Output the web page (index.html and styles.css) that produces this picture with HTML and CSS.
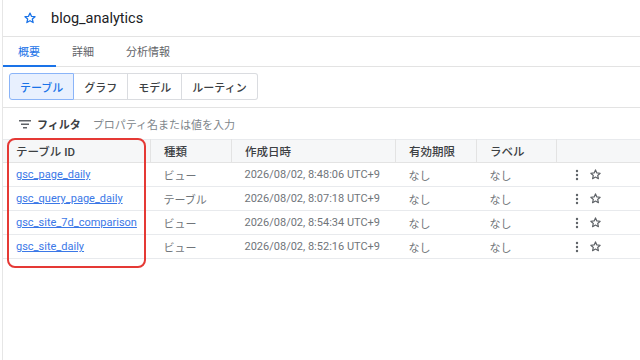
FILE: index.html
```html
<!DOCTYPE html>
<html lang="ja">
<head>
    <meta charset="UTF-8">
    <meta name="viewport" content="width=device-width, initial-scale=1.0">
    <title>blog_analytics</title>
    <link rel="stylesheet" href="styles.css">
</head>
<body>

    <div class="panel">

        <!-- Dataset title -->
        <div class="title-bar">
            <svg class="title-star" viewBox="0 0 24 24" width="14" height="14">
                <path d="M12 3.5l2.5 5.6 6.1.6-4.6 4.1 1.4 6-5.4-3.2-5.4 3.2 1.4-6-4.6-4.1 6.1-.6z" fill="none" stroke="#1a73e8" stroke-width="2.2" stroke-linejoin="round"/>
            </svg>
            <span class="title-text">blog_analytics</span>
        </div>

        <!-- Tabs -->
        <div class="tabs">
            <div class="tab active">概要</div>
            <div class="tab">詳細</div>
            <div class="tab">分析情報</div>
        </div>

        <!-- View switcher -->
        <div class="switcher">
            <div class="seg selected">テーブル</div>
            <div class="seg">グラフ</div>
            <div class="seg">モデル</div>
            <div class="seg">ルーティン</div>
        </div>

        <!-- Filter -->
        <div class="filter">
            <svg class="filter-icon" viewBox="0 0 12 10" width="12" height="10">
                <rect x="0" y="1" width="12" height="1.5" fill="#5f6368"/>
                <rect x="2" y="4.5" width="8" height="1.5" fill="#5f6368"/>
                <rect x="4" y="8" width="4" height="1.5" fill="#5f6368"/>
            </svg>
            <span class="filter-label">フィルタ</span>
            <span class="filter-hint">プロパティ名または値を入力</span>
        </div>

        <!-- Table list -->
        <div class="table-wrap">
            <table class="list">
                <thead>
                    <tr>
                        <th class="c-id">テーブル ID</th>
                        <th class="c-type">種類</th>
                        <th class="c-date">作成日時</th>
                        <th class="c-exp">有効期限</th>
                        <th class="c-label">ラベル</th>
                        <th class="c-act"></th>
                    </tr>
                </thead>
                <tbody>
                    <tr>
                        <td><a href="#">gsc_page_daily</a></td>
                        <td>ビュー</td>
                        <td>2026/08/02, 8:48:06 UTC+9</td>
                        <td>なし</td>
                        <td>なし</td>
                        <td class="actions">
                            <svg class="kebab" viewBox="0 0 4 12" width="4" height="12"><circle cx="2" cy="2" r="1.2"/><circle cx="2" cy="6" r="1.2"/><circle cx="2" cy="10" r="1.2"/></svg>
                            <svg class="star" viewBox="0 0 24 24" width="13" height="13"><path d="M12 3.5l2.5 5.6 6.1.6-4.6 4.1 1.4 6-5.4-3.2-5.4 3.2 1.4-6-4.6-4.1 6.1-.6z"/></svg>
                        </td>
                    </tr>
                    <tr>
                        <td><a href="#">gsc_query_page_daily</a></td>
                        <td>テーブル</td>
                        <td>2026/08/02, 8:07:18 UTC+9</td>
                        <td>なし</td>
                        <td>なし</td>
                        <td class="actions">
                            <svg class="kebab" viewBox="0 0 4 12" width="4" height="12"><circle cx="2" cy="2" r="1.2"/><circle cx="2" cy="6" r="1.2"/><circle cx="2" cy="10" r="1.2"/></svg>
                            <svg class="star" viewBox="0 0 24 24" width="13" height="13"><path d="M12 3.5l2.5 5.6 6.1.6-4.6 4.1 1.4 6-5.4-3.2-5.4 3.2 1.4-6-4.6-4.1 6.1-.6z"/></svg>
                        </td>
                    </tr>
                    <tr>
                        <td><a href="#">gsc_site_7d_comparison</a></td>
                        <td>ビュー</td>
                        <td>2026/08/02, 8:54:34 UTC+9</td>
                        <td>なし</td>
                        <td>なし</td>
                        <td class="actions">
                            <svg class="kebab" viewBox="0 0 4 12" width="4" height="12"><circle cx="2" cy="2" r="1.2"/><circle cx="2" cy="6" r="1.2"/><circle cx="2" cy="10" r="1.2"/></svg>
                            <svg class="star" viewBox="0 0 24 24" width="13" height="13"><path d="M12 3.5l2.5 5.6 6.1.6-4.6 4.1 1.4 6-5.4-3.2-5.4 3.2 1.4-6-4.6-4.1 6.1-.6z"/></svg>
                        </td>
                    </tr>
                    <tr>
                        <td><a href="#">gsc_site_daily</a></td>
                        <td>ビュー</td>
                        <td>2026/08/02, 8:52:16 UTC+9</td>
                        <td>なし</td>
                        <td>なし</td>
                        <td class="actions">
                            <svg class="kebab" viewBox="0 0 4 12" width="4" height="12"><circle cx="2" cy="2" r="1.2"/><circle cx="2" cy="6" r="1.2"/><circle cx="2" cy="10" r="1.2"/></svg>
                            <svg class="star" viewBox="0 0 24 24" width="13" height="13"><path d="M12 3.5l2.5 5.6 6.1.6-4.6 4.1 1.4 6-5.4-3.2-5.4 3.2 1.4-6-4.6-4.1 6.1-.6z"/></svg>
                        </td>
                    </tr>
                </tbody>
            </table>

            <!-- Red highlight around the ID column -->
            <div class="highlight"></div>
        </div>

    </div>

</body>
</html>
```

FILE: styles.css
```css
/* Page base */
body {
    margin: 0;
    background-color: #ffffff;
    font-family: Roboto, "Noto Sans CJK JP", sans-serif;
    color: #3c4043;
}

/* Panel with the thin line on the left */
.panel {
    margin-left: 2px;
    border-left: 1px solid #e6e6e6;
    height: 360px;
}

/* Title row */
.title-bar {
    height: 36px;
    display: flex;
    align-items: center;
    padding-left: 20px;
    border-bottom: 1px solid #e3e3e3;
}

.title-star {
    margin-right: 14px;
}

.title-text {
    font-size: 14.5px;
    color: #202124;
}

/* Tabs */
.tabs {
    height: 29px;
    display: flex;
    border-bottom: 1px solid #e3e3e3;
}

.tab {
    font-size: 11px;
    color: #5f6368;
    padding: 0 16px;
    display: flex;
    align-items: center;
    border-bottom: 2px solid transparent;
    margin-bottom: -1px;
}

.tab.active {
    color: #1a73e8;
    border-bottom-color: #1a73e8;
    padding-left: 15px;
    padding-right: 16px;
}

/* Segmented view switcher */
.switcher {
    display: flex;
    padding: 6px 0 7px 6px;
    border-bottom: 1px solid #e3e3e3;
}

.seg {
    height: 25px;
    font-size: 11px;
    font-weight: 500;
    color: #3c4043;
    border: 1px solid #dadce0;
    border-left: none;
    display: flex;
    align-items: center;
    padding: 0 10px;
}

.seg:first-child {
    border-left: 1px solid #dadce0;
    border-radius: 3px 0 0 3px;
}

.seg:last-child {
    border-radius: 0 3px 3px 0;
}

.seg.selected {
    background-color: #e8f0fe;
    border: 1px solid #8ab4f8;
    color: #1a73e8;
    padding: 0 10px;
}

/* Filter row */
.filter {
    height: 31px;
    display: flex;
    align-items: center;
    padding-left: 16px;
}

.filter-icon {
    margin-right: 6px;
}

.filter-label {
    font-size: 11px;
    font-weight: 700;
    color: #3c4043;
    margin-right: 12px;
}

.filter-hint {
    font-size: 11px;
    color: #80868b;
}

/* Table list */
.table-wrap {
    position: relative;
}

.list {
    width: 100%;
    border-collapse: collapse;
    font-size: 11px;
    table-layout: fixed;
}

.list th {
    height: 22px;
    background-color: #f6f7f8;
    text-align: left;
    font-weight: 500;
    font-size: 11.5px;
    color: #3c4043;
    padding: 0 0 0 13px;
    border-top: 1px solid #e8eaed;
    border-bottom: 1px solid #e3e3e3;
    border-right: 1px solid #e3e3e3;
}

.list th:last-child {
    border-right: none;
}

.list td {
    height: 23px;
    padding: 0 0 0 13px;
    color: #70757a;
    border-bottom: 1px solid #e8eaed;
    white-space: nowrap;
}

.c-id { width: 134px; }
.c-type { width: 67px; }
.c-date { width: 150px; }
.c-exp { width: 67px; }
.c-label { width: 66px; }

.list a {
    color: #3b78e7;
    text-decoration: underline;
}

.actions {
    padding-left: 18px !important;
}

.kebab {
    fill: #5f6368;
    vertical-align: middle;
    margin-right: 8px;
}

.star {
    fill: none;
    stroke: #5f6368;
    stroke-width: 2.2;
    stroke-linejoin: round;
    vertical-align: middle;
}

/* Annotation box */
.highlight {
    position: absolute;
    left: 4px;
    top: -1px;
    width: 135px;
    height: 126px;
    border: 2px solid #e53935;
    border-radius: 8px;
}
```
